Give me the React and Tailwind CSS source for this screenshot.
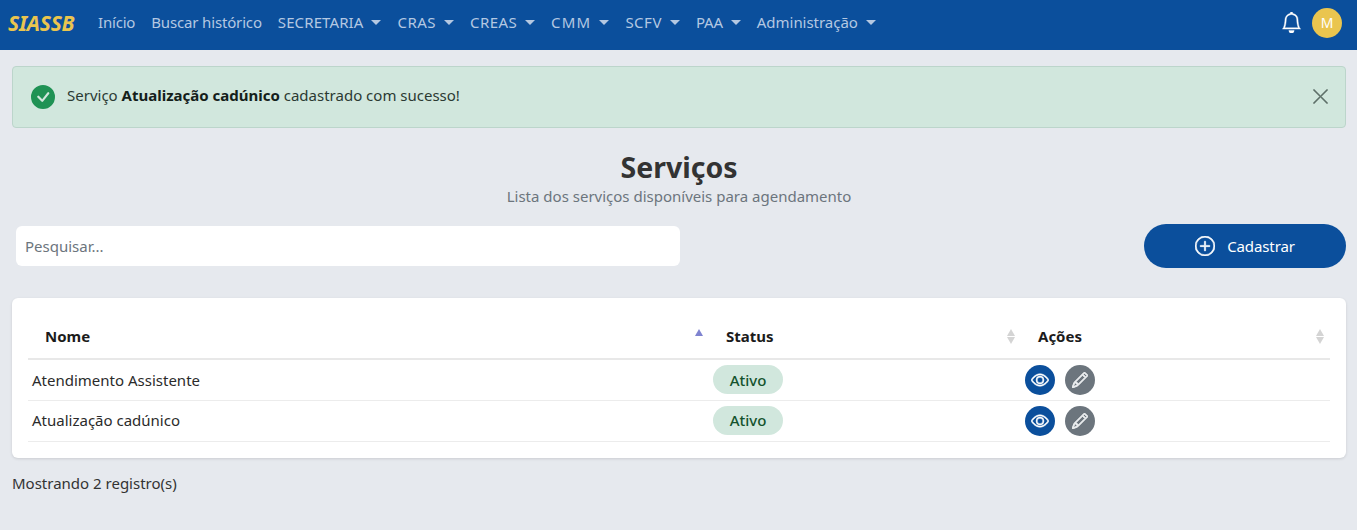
import React from "react";
import { BsBell, BsCheckCircleFill, BsEye, BsPencil, BsPlusCircle, BsXLg } from "react-icons/bs";

const links = [
  { label: "Início", spacing: "tracking-[-0.2px]" },
  { label: "Buscar histórico", spacing: "tracking-[-0.15px]" },
  { label: "SECRETARIA", spacing: "tracking-[0.1px]", caret: true },
  { label: "CRAS", spacing: "tracking-[0.5px]", caret: true },
  { label: "CREAS", spacing: "tracking-[0.4px]", caret: true },
  { label: "CMM", spacing: "tracking-[1.2px]", caret: true },
  { label: "SCFV", spacing: "tracking-[0.5px]", caret: true },
  { label: "PAA", spacing: "tracking-[-0.2px]", caret: true },
  { label: "Administração", spacing: "tracking-[-0.03px]", caret: true },
];

const rows = ["Atendimento Assistente", "Atualização cadúnico"];

const SortArrows = ({ active }) => (
  <span className="absolute right-[6px] top-[9px] flex flex-col gap-[1px]">
    <span className={`w-0 h-0 border-x-[4px] border-x-transparent border-b-[7px] ${active ? "border-b-[#7f83d0]" : "border-b-[#d4d4d4]"}`} />
    {!active && <span className="w-0 h-0 border-x-[4px] border-x-transparent border-t-[7px] border-t-[#d4d4d4]" />}
  </span>
);

const Navbar = () => (
  <nav className="h-[50px] bg-[#0b4f9c] flex items-center pl-[8px] pr-[15px] pb-[5px]">
    <span className="w-[66px] mr-[24px] text-[21px] leading-[28px] font-bold italic text-[#eac54f] tracking-[-0.2px]">SIASSB</span>
    <div className="flex items-center gap-[16px]">
      {links.map((link) => (
        <span key={link.label} className={`flex items-center text-[15px] text-[#b4c8e2] ${link.spacing}`}>
          {link.label}
          {link.caret && (
            <span className="ml-[8px] w-0 h-0 border-x-[5px] border-x-transparent border-t-[5px] border-t-[#b4c8e2]" />
          )}
        </span>
      ))}
    </div>
    <div className="ml-auto flex items-center gap-[10px]">
      <BsBell className="text-white text-[21px] stroke-[0.3]" />
      <span className="w-[30px] h-[30px] rounded-full bg-[#eac54f] text-white text-[14px] flex items-center justify-center">M</span>
    </div>
  </nav>
);

const App = () => {
  return (
    <div className="min-h-[530px] bg-[#e6e9ee] text-[#212529] font-['Noto_Sans','Open_Sans',sans-serif]">
      <Navbar />
      <main className="pl-[12px] pr-[11px] pt-[16px]">
        <div className="h-[62px] rounded-[4px] bg-[#d1e7dd] border border-[#bcd5cb] flex items-center pl-[18px] pr-[15px]">
          <BsCheckCircleFill className="text-[#1f9254] text-[24px]" />
          <p className="ml-[12px] pb-[5px] text-[15px] leading-[22px] text-[#2b3a33]">
            Serviço <b className="font-bold text-[#14201a]">Atualização cadúnico</b> cadastrado com sucesso!
          </p>
          <BsXLg className="ml-auto mb-[2px] text-[#5d6f68] text-[19px] stroke-[0.4]" />
        </div>

        <div className="mt-[23px] text-center">
          <h1 className="text-[28.5px] leading-[32px] font-bold text-[#333333]">Serviços</h1>
          <p className="mt-[3px] text-[15px] leading-[20px] text-[#6c757d]">Lista dos serviços disponíveis para agendamento</p>
        </div>

        <div className="mt-[18px] flex items-center justify-between pl-[4px]">
          <input
            placeholder="Pesquisar..."
            className="w-[664px] h-[40px] rounded-[6px] bg-white px-[9px] text-[15px] placeholder:text-[#6c757d] outline-none"
          />
          <button className="w-[202px] h-[44px] rounded-full bg-[#0b4f9c] text-white text-[15px] tracking-[-0.1px] flex items-center justify-center gap-[12px]">
            <BsPlusCircle className="text-[20px] stroke-[0.5]" />
            Cadastrar
          </button>
        </div>

        <section className="mt-[30px] bg-white rounded-[6px] shadow-[0_1px_3px_rgba(0,0,0,0.12)] px-[16px] pt-[22px] pb-[16px]">
          <table className="w-full table-fixed border-collapse text-[15px]">
            <thead>
              <tr className="h-[39px] border-b-2 border-[#e8e8e8] text-left">
                <th className="relative w-[681px] pl-[17px] pb-[6px] font-bold text-[#1b1b1b]">Nome<SortArrows active /></th>
                <th className="relative w-[312px] pl-[17px] pb-[6px] font-bold text-[#1b1b1b]">Status<SortArrows /></th>
                <th className="relative pl-[17px] pb-[6px] font-bold text-[#1b1b1b]">Ações<SortArrows /></th>
              </tr>
            </thead>
            <tbody>
              {rows.map((row) => (
                <tr key={row} className="h-[41px] border-b border-[#ececec]">
                  <td className="pl-[4px] text-[#2b2b2b]">{row}</td>
                  <td className="pl-[4px]">
                    <span className="inline-flex items-center justify-center w-[70px] h-[29px] rounded-full bg-[#d1e7dd] text-[#14532d] font-medium">Ativo</span>
                  </td>
                  <td className="pl-[4px]">
                    <div className="flex items-center gap-[10px]">
                      <span className="w-[30px] h-[30px] rounded-full bg-[#0b4f9c] text-white flex items-center justify-center"><BsEye className="text-[18px] stroke-[0.5]" /></span>
                      <span className="w-[30px] h-[30px] rounded-full bg-[#6c757d] text-[#eef0f2] flex items-center justify-center"><BsPencil className="text-[16px] stroke-[0.9]" /></span>
                    </div>
                  </td>
                </tr>
              ))}
            </tbody>
          </table>
        </section>

        <p className="mt-[14px] text-[15px] leading-[22px] text-[#333333]">Mostrando 2 registro(s)</p>
      </main>
    </div>
  );
};

export default App;
